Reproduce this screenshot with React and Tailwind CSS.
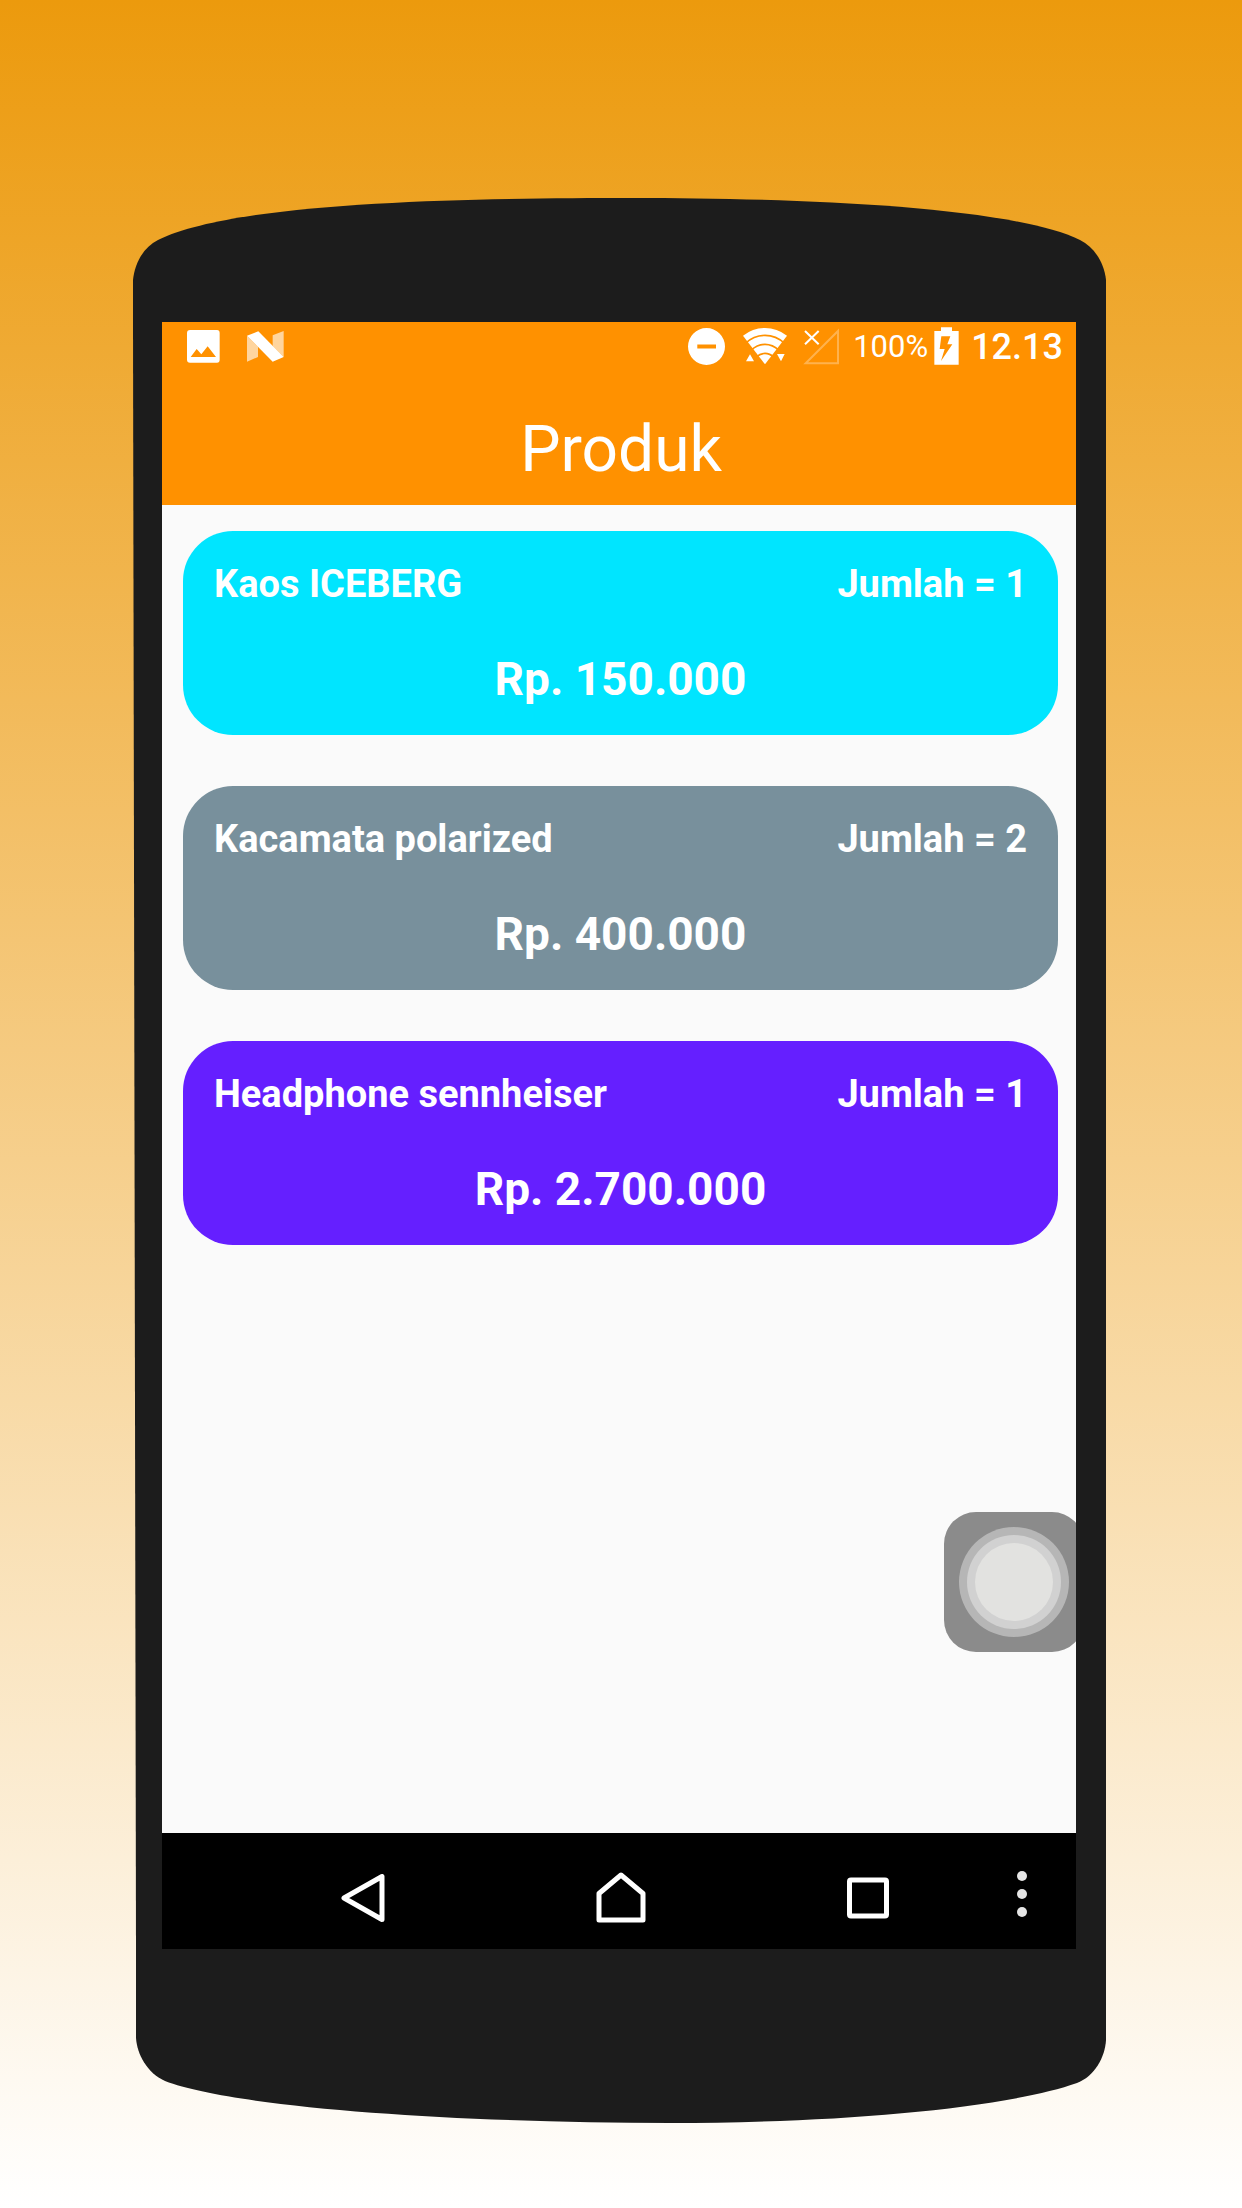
const products = [
  { name: "Kaos ICEBERG", count: 1, price: "150.000", color: "bg-[#00e5ff]" },
  { name: "Kacamata polarized", count: 2, price: "400.000", color: "bg-[#78909c]" },
  { name: "Headphone sennheiser", count: 1, price: "2.700.000", color: "bg-[#651fff]" },
];

function PhoneTop() {
  return (
    <svg className="block h-[124px] w-full text-[#1c1c1c]" viewBox="0 0 973 124" preserveAspectRatio="none" fill="currentColor" aria-hidden="true">
      <path d="M0 124V82C2 64 11 49 25 42C105 3 340 0 500 0C650 0 875 7 947 42C961 49 971 64 973 82V124Z" />
    </svg>
  );
}

function PhoneBottom() {
  return (
    <svg className="block h-[174px] w-full text-[#1c1c1c]" viewBox="0 0 973 174" preserveAspectRatio="none" fill="currentColor" aria-hidden="true">
      <path d="M3 0V89C4 105 14 124 32 132C105 160 340 174 537 174C700 174 870 160 944 134C962 127 972 108 973 91V0Z" />
    </svg>
  );
}

function StatusBar() {
  return (
    <div className="flex h-12 items-center justify-between pr-[13px] pl-[25px] text-white">
      <div className="flex items-center gap-[27px]">
        <svg className="h-[33px] w-[33px]" viewBox="0 0 99 99" aria-label="Image notification">
          <path fillRule="evenodd" fill="currentColor" d="M9 0H90Q98 0 98 9V89Q98 98 90 98H9Q0 98 0 89V9Q0 0 9 0ZM11 81H87L62 49L43 73L29 57Z" />
        </svg>
        <svg className="h-[31px] w-[37px]" viewBox="0 0 111 93" fill="currentColor" aria-label="System notification">
          <path opacity=".62" d="M0 14L33 47V78L0 92ZM77 13L110 0V78L77 45Z" />
          <path d="M0 14L34 1L110 78L77 92Z" />
        </svg>
      </div>
      <div className="flex items-center">
        <svg className="h-[37px] w-[37px]" viewBox="0 0 37 37" aria-label="Do not disturb">
          <path fillRule="evenodd" fill="currentColor" d="M18.500 0A18.500 18.500 0 1 1 18.500 37A18.500 18.500 0 1 1 18.500 0ZM9.300 16.500V20.500H28V16.500Z" />
        </svg>
        <svg className="ml-[18px] h-[38px] w-[44px]" viewBox="0 0 132 114" aria-label="Wi-Fi">
          <path fill="currentColor" d="M66 112L0 26Q30 3 66 3T132 26Z" />
          <g fill="none" stroke="#ff9100" strokeWidth="5">
            <path d="M7 49Q33 25 66 25T125 49" />
            <path d="M24 70Q43 52 66 52T108 70" />
            <path d="M38 91Q52 79 66 79T94 91" />
          </g>
          <path fill="currentColor" d="M9 103H33L21 82ZM102 81H125L114 103Z" />
        </svg>
        <svg className="ml-4 h-[37px] w-[36px]" viewBox="0 0 108 111" fill="none" stroke="currentColor" aria-label="No mobile signal">
          <path opacity=".3" strokeWidth="6" d="M105 9V106H8Z" />
          <path strokeWidth="6" d="M6 9L47 49M47 9L6 49" />
        </svg>
        <span className="ml-[14px] pt-0.5 text-[31px] leading-9">100%</span>
        <svg className="ml-[6px] h-[38px] w-[25px]" viewBox="0 0 75 114" aria-label="Battery charging">
          <path fillRule="evenodd" fill="currentColor" d="M21 1H54V12H74V113H1V12H21ZM22 28L17 66H32L21 102L55 52H40L49 28Z" />
        </svg>
        <span className="ml-3 pt-0.5 text-[36px] leading-9 font-medium">12.13</span>
      </div>
    </div>
  );
}

function ProductCard({ name, count, price, color }) {
  return (
    <li className={`rounded-[50px] px-[31px] pt-[31px] pb-[29px] font-bold text-white ${color}`}>
      <div className="flex justify-between text-[38px] leading-[44px]">
        <h2>{name}</h2>
        <span>Jumlah = {count}</span>
      </div>
      <p className="mt-[46px] text-center text-[46px] leading-[54px]">Rp. {price}</p>
    </li>
  );
}

function NavBar() {
  return (
    <nav className="flex h-[116px] items-center bg-black pt-[14px] pr-[30px] pl-[177px] text-white">
      <div className="flex flex-1 justify-between">
        <button type="button" aria-label="Back" className="pr-[10px]">
          <svg className="size-12" viewBox="0 0 48 48" fill="none" stroke="currentColor" strokeWidth="5" strokeLinejoin="round">
            <path d="M5 24L43 2.500V45.500Z" />
          </svg>
        </button>
        <button type="button" aria-label="Home">
          <svg className="h-12 w-[50px] overflow-visible" viewBox="0 0 50 48" fill="none" stroke="currentColor" strokeWidth="5" strokeLinejoin="round">
            <path d="M25 1L47 19.500V46H3V19.500Z" />
          </svg>
        </button>
        <button type="button" aria-label="Recent apps">
          <svg className="size-12" viewBox="0 0 48 48" fill="none" stroke="currentColor" strokeWidth="5">
            <rect x="5.500" y="6" width="37" height="36" rx="1.500" />
          </svg>
        </button>
      </div>
      <button type="button" aria-label="More" className="ml-[106px]">
        <svg className="size-12 overflow-visible text-[#e5e5e5]" viewBox="0 0 48 48" fill="currentColor">
          <circle cx="24" cy="2" r="5" />
          <circle cx="24" cy="20" r="5" />
          <circle cx="24" cy="38" r="5" />
        </svg>
      </button>
    </nav>
  );
}

export default function App() {
  return (
    <div className="flex min-h-screen flex-col bg-linear-to-b/srgb from-[#ec9a0d] to-white pt-[198px] pr-[136px] pb-[85px] pl-[133px] font-[Roboto,sans-serif]">
      <PhoneTop />
      <div className="flex flex-1 flex-col bg-[#1c1c1c] pr-[30px] pl-[29px] [clip-path:polygon(0_0,100%_0,100%_100%,3px_100%)]">
        <div className="relative flex flex-1 flex-col overflow-hidden bg-[#fafafa]">
          <header className="bg-[#ff9100]">
            <StatusBar />
            <h1 className="pt-[42px] pb-[17px] pl-1 text-center text-[64px] leading-[76px] text-white">Produk</h1>
          </header>
          <main className="flex-1 pt-[26px] pr-[18px] pl-[21px]">
            <ul className="flex flex-col gap-[51px]">
              {products.map((p) => (
                <ProductCard key={p.name} {...p} />
              ))}
            </ul>
          </main>
          <NavBar />
          <button type="button" aria-label="Assistive touch" className="absolute -right-2 bottom-[297px] flex size-[140px] items-center justify-center rounded-[32px] bg-[#8b8b8b]">
            <span className="flex size-[110px] items-center justify-center rounded-full bg-[#b6b6b6]">
              <span className="flex size-[94px] items-center justify-center rounded-full bg-[#d1d1d1]">
                <span className="size-[78px] rounded-full bg-[#e2e2e0]" />
              </span>
            </span>
          </button>
        </div>
      </div>
      <PhoneBottom />
    </div>
  );
}
